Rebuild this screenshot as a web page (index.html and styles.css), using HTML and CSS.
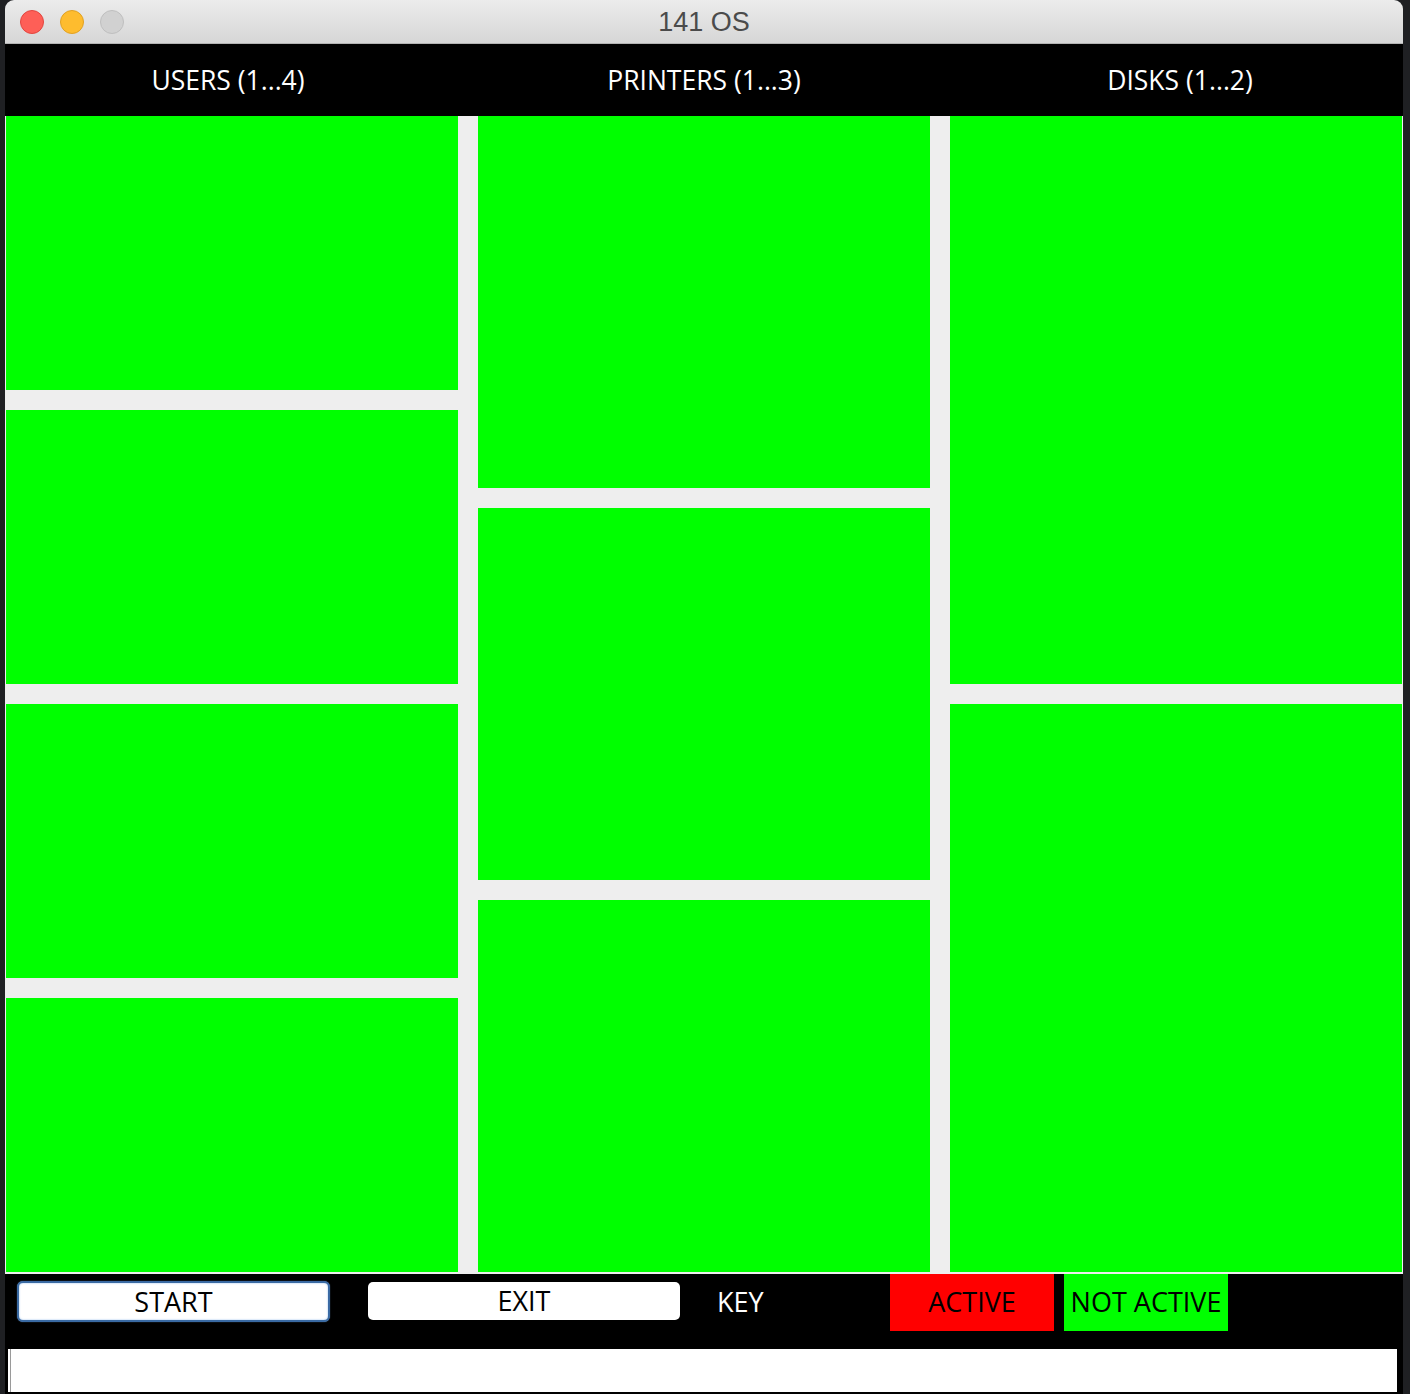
FILE: index.html
```html
<!DOCTYPE html>
<html lang="en">
<head>
<meta charset="utf-8">
<title>141 OS</title>
<link rel="stylesheet" href="styles.css">
</head>
<body>
<div class="window">
  <div class="titlebar">
    <div class="lights">
      <span class="light red"></span>
      <span class="light yellow"></span>
      <span class="light gray"></span>
    </div>
    <div class="title">141 OS</div>
    <div></div>
  </div>
  <div class="header">
    <div class="label">USERS (1...4)</div>
    <div class="label">PRINTERS (1...3)</div>
    <div class="label">DISKS (1...2)</div>
  </div>
  <div class="grid">
    <div class="column">
      <div class="panel"></div>
      <div class="panel"></div>
      <div class="panel"></div>
      <div class="panel"></div>
    </div>
    <div class="column">
      <div class="panel"></div>
      <div class="panel"></div>
      <div class="panel"></div>
    </div>
    <div class="column">
      <div class="panel"></div>
      <div class="panel"></div>
    </div>
  </div>
  <div class="footer">
    <div class="controls">
      <div class="btn btn-start">START</div>
      <div class="btn btn-exit">EXIT</div>
      <div class="key">KEY</div>
      <div class="legend legend-active">ACTIVE</div>
      <div class="legend legend-inactive">NOT ACTIVE</div>
    </div>
    <div class="field"></div>
  </div>
</div>
</body>
</html>
```

FILE: styles.css
```css
html, body {
  margin: 0;
  padding: 0;
}
body {
  width: 1410px;
  height: 1394px;
  overflow: hidden;
  background: #1f2023;
  font-family: "Open Sans", "DejaVu Sans", sans-serif;
}
.window {
  margin-left: 5px;
  width: 1398px;
  height: 1394px;
  display: flex;
  flex-direction: column;
}
.titlebar {
  height: 43px;
  border-bottom: 1px solid #b4b4b4;
  border-radius: 9px 9px 0 0;
  background: linear-gradient(#ececec, #d6d6d6);
  display: grid;
  grid-template-columns: 1fr auto 1fr;
  align-items: center;
}
.lights {
  display: flex;
  gap: 16px;
  padding-left: 15px;
  padding-top: 1px;
}
.light {
  width: 24px;
  height: 24px;
  border-radius: 50%;
  box-sizing: border-box;
}
.red { background: #fe5f57; border: 1px solid #e2463f; }
.yellow { background: #febc2e; border: 1px solid #e1a123; }
.gray { background: #d1d1d1; border: 1px solid #bfbfbf; }
.title {
  font-family: "Liberation Sans", "Helvetica", sans-serif;
  font-size: 27px;
  color: #4b4b4b;
  padding-top: 2px;
}
.header {
  height: 72px;
  background: #000;
  display: grid;
  grid-template-columns: repeat(3, 476px);
  justify-content: center;
  align-items: center;
}
.label {
  color: #fff;
  font-size: 26.5px;
  text-align: center;
  line-height: 1;
  padding-top: 1px;
}
.grid {
  background: #eeeeee;
  padding: 0 1px 2px 1px;
  height: 1156px;
  display: grid;
  grid-template-columns: repeat(3, 452px);
  column-gap: 20px;
}
.column {
  display: flex;
  flex-direction: column;
  gap: 20px;
}
.panel {
  flex: 1;
  background: #00ff00;
}
.footer {
  flex: 1;
  background: #000;
  display: flex;
  flex-direction: column;
}
.controls {
  height: 57px;
  display: flex;
  align-items: flex-start;
}
.btn {
  box-sizing: border-box;
  background: #fff;
  color: #000;
  font-size: 27px;
  display: flex;
  align-items: center;
  justify-content: center;
  border-radius: 6px;
  padding-bottom: 1px;
}
.btn-start {
  margin-left: 12px;
  margin-top: 7px;
  width: 313px;
  height: 41px;
  border: 2px solid #3a6aa3;
  box-shadow: inset 0 0 2px #8ab6ea, 0 0 1px #6a9ad4;
}
.btn-exit {
  margin-left: 38px;
  margin-top: 8px;
  width: 312px;
  height: 38px;
  border-radius: 5px;
}
.key {
  margin-left: 37px;
  width: 173px;
  height: 57px;
  line-height: 55px;
  color: #fff;
  font-size: 27px;
  box-sizing: border-box;
}
.legend {
  width: 164px;
  height: 57px;
  display: flex;
  align-items: center;
  justify-content: center;
  font-size: 27px;
  color: #000;
  white-space: nowrap;
  padding-bottom: 3px;
  box-sizing: border-box;
}
.legend-active {
  background: #ff0000;
}
.legend-inactive {
  margin-left: 10px;
  background: #00ff00;
}
.field {
  margin-top: 18px;
  margin-left: 3px;
  width: 1389px;
  height: 43px;
  background: #fff;
  box-shadow: inset 2px 0 0 #fff, inset 3px 0 0 #9a9a9a;
}
```
